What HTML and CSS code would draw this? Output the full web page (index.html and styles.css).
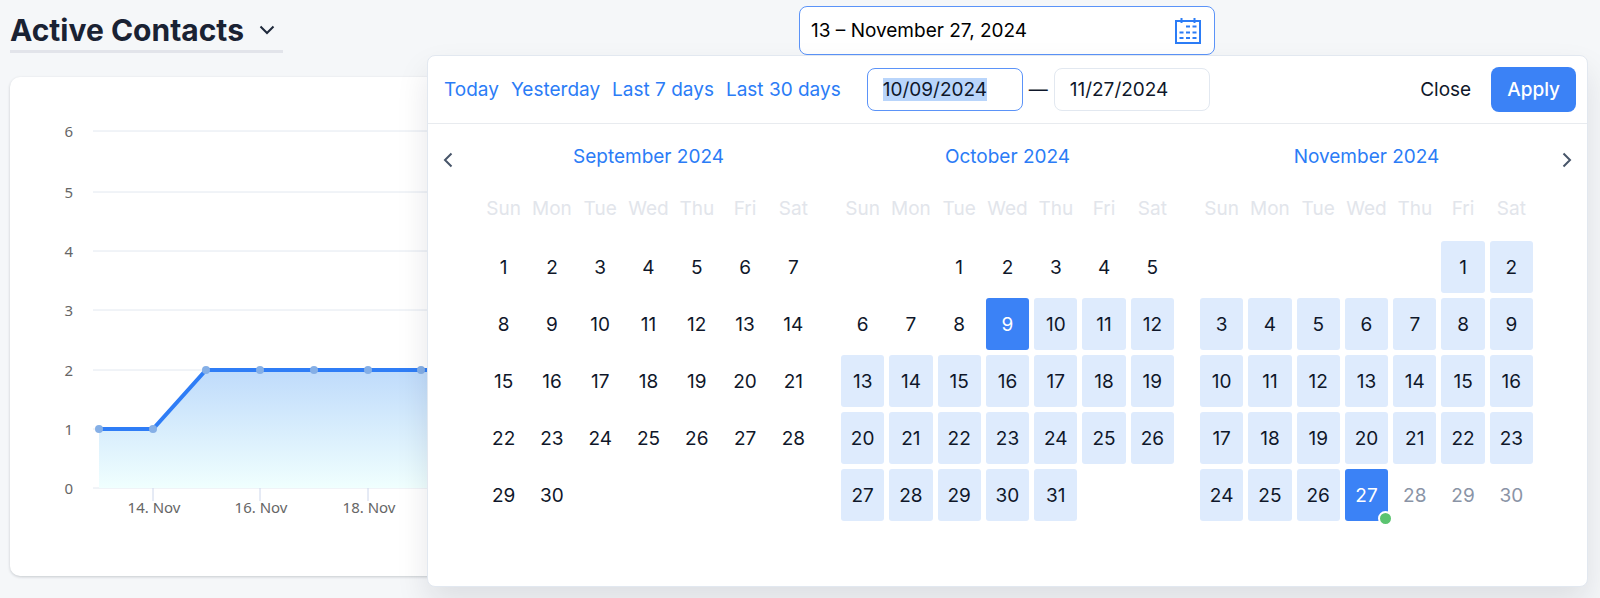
FILE: index.html
```
<!DOCTYPE html>
<html lang="en">
<head>
    <meta charset="UTF-8">
    <meta name="viewport" content="width=device-width, initial-scale=1.0">
    <title>Active Contacts</title>
    <link rel="stylesheet" href="styles.css">
</head>
<body>
    <header class="page-header">
        <h1 class="page-title">
            <button type="button" class="title-button">
                Active Contacts
                <svg width="16" height="10" viewBox="0 0 16 10" aria-hidden="true"><path d="M1.500 1.500L8 8l6.500-6.500"/></svg>
            </button>
        </h1>
        <button type="button" class="date-field">
            <span>13 – November 27, 2024</span>
            <svg width="28" height="28" viewBox="0 0 28 28" aria-hidden="true">
                <path d="M2 4h24v22H2zM7.500 1v5M20.500 1v5"/>
                <path d="M12 9.500h4M18.500 9.500h4M5.500 15.500h4M12 15.500h4M18.500 15.500h4M5.500 21h4M12 21h4M18.500 21h4"/>
            </svg>
        </button>
    </header>

    <main class="chart-card">
        <svg class="chart" role="img" aria-label="Active contacts per day">
            <defs>
                <linearGradient id="area-fill" x1="0" y1="0" x2="0" y2="1">
                    <stop offset="0" stop-color="#bfdbfb"/>
                    <stop offset="1" stop-color="#f0fffe"/>
                </linearGradient>
            </defs>
            <g id="chart-grid"></g>
            <g id="chart-series"></g>
        </svg>
    </main>

    <section class="picker" aria-label="Date range">
        <form class="picker-bar" onsubmit="event.preventDefault()">
            <nav class="presets">
                <a href="#today">Today</a>
                <a href="#yesterday">Yesterday</a>
                <a href="#last-7">Last 7 days</a>
                <a href="#last-30">Last 30 days</a>
            </nav>
            <div class="range">
                <input type="text" id="date-from" value="10/09/2024" aria-label="From">
                <span>—</span>
                <input type="text" id="date-to" value="11/27/2024" aria-label="To">
            </div>
            <div class="actions">
                <button type="button" class="close-button">Close</button>
                <button class="apply-button">Apply</button>
            </div>
        </form>
        <div class="picker-body">
            <button type="button" class="nav-button" aria-label="Previous month">
                <svg width="10" height="16" viewBox="0 0 10 16"><path d="M8.500 1.500L2 8l6.500 6.500"/></svg>
            </button>
            <div class="months" id="months"></div>
            <button type="button" class="nav-button" aria-label="Next month">
                <svg width="10" height="16" viewBox="0 0 10 16"><path d="M1.500 1.500L8 8l-6.500 6.500"/></svg>
            </button>
        </div>
    </section>

    <script>
        // Calendar
        const WEEKDAYS = ['Sun', 'Mon', 'Tue', 'Wed', 'Thu', 'Fri', 'Sat'];
        const rangeStart = new Date(2024, 9, 9).getTime();
        const rangeEnd = new Date(2024, 10, 27).getTime();
        const today = rangeEnd;

        function dayClass(time) {
            const names = ['day'];
            if (time === rangeStart || time === rangeEnd) {
                names.push('selected');
            } else if (time > rangeStart && time < rangeEnd) {
                names.push('in-range');
            }
            if (time === today) names.push('today');
            return names.join(' ');
        }

        function renderMonth(year, month) {
            const first = new Date(year, month, 1);
            const title = first.toLocaleString('en-US', { month: 'long', year: 'numeric' });
            const dayCount = new Date(year, month + 1, 0).getDate();
            const cells = Array(first.getDay()).fill('<td></td>');

            for (let day = 1; day <= dayCount; day++) {
                const time = new Date(year, month, day).getTime();
                const disabled = time > today ? 'disabled' : '';
                cells.push(`<td><button type="button" class="${dayClass(time)}" ${disabled}>${day}</button></td>`);
            }

            let rows = '';
            for (let i = 0; i < cells.length; i += 7) {
                rows += `<tr>${cells.slice(i, i + 7).join('')}</tr>`;
            }
            const heads = WEEKDAYS.map(name => `<th scope="col">${name}</th>`).join('');
            return `<table class="month"><caption>${title}</caption><thead><tr>${heads}</tr></thead><tbody>${rows}</tbody></table>`;
        }

        document.getElementById('months').innerHTML = [8, 9, 10].map(m => renderMonth(2024, m)).join('');

        // Chart
        const gridY = [411, 352, 293, 233, 174, 115, 54]; // 0 to 6
        const values = [1, 1, 2, 2, 2, 2, 2, 2];
        const pointX = i => Math.round(89 + i * 53.700);

        let grid = gridY.map((y, i) => `<text x="63" y="${y + 6}" text-anchor="end">${i}</text><line x1="83" x2="97%" y1="${y}" y2="${y}"/>`).join('');
        [1, 3, 5].forEach(i => {
            grid += `<line class="tick" x1="${pointX(i)}" x2="${pointX(i)}" y1="411" y2="424"/>`;
            grid += `<text x="${pointX(i) + 1}" y="436" text-anchor="middle">${13 + i}. Nov</text>`;
        });
        document.getElementById('chart-grid').innerHTML = grid;

        const points = values.map((v, i) => `${pointX(i)},${gridY[v]}`);
        document.getElementById('chart-series').innerHTML =
            `<polygon points="${pointX(0)},411 ${points.join(' ')} ${pointX(values.length - 1)},411"/>` +
            `<polyline points="${points.join(' ')}"/>` +
            values.map((v, i) => `<circle cx="${pointX(i)}" cy="${gridY[v]}" r="4"/>`).join('');

        // Start editing with the first date
        const dateFrom = document.getElementById('date-from');
        dateFrom.focus();
        dateFrom.select();
    </script>
</body>
</html>
```
FILE: styles.css
```
* {
    box-sizing: border-box;
}
body {
    position: relative;
    margin: 0;
    padding: 6px 10px 22px;
    background-color: #f5f7f9;
    color: #0f172a;
    font-family: Inter, "Liberation Sans", sans-serif;
    font-size: 19px;
}
button, input {
    font: inherit;
    color: inherit;
}
button {
    padding: 0;
    border: none;
    background: none;
    cursor: pointer;
}
svg {
    fill: none;
}

/* header */
.page-header {
    display: flex;
    align-items: flex-start;
    justify-content: space-between;
    margin-bottom: 22px;
}
.page-title {
    margin: 0;
    font-size: 30px;
    font-weight: 700;
}
.title-button {
    display: flex;
    align-items: center;
    gap: 15px;
    height: 47px;
    padding: 4px 8px 0 0;
    border-bottom: 3px solid #e2e4ea;
    color: #1a2233;
}
.title-button svg {
    stroke: #1e293b;
    stroke-width: 2;
}
.date-field {
    display: flex;
    align-items: center;
    justify-content: space-between;
    width: 416px;
    height: 49px;
    margin-right: 375px;
    padding: 0 12px 0 11px;
    border: 1px solid #5b93f8;
    border-radius: 8px;
    background-color: #fff;
    color: #000;
}
.date-field svg {
    stroke: #2b7cf6;
    stroke-width: 2;
}

/* chart */
.chart-card {
    height: 499px;
    margin-right: 8px;
    border-radius: 10px;
    background-color: #fff;
    box-shadow: 0 1px 3px rgba(15, 23, 42, 0.2);
}
.chart {
    display: block;
    width: 100%;
    height: 460px;
}
.chart text {
    fill: #666;
    font-family: "Noto Sans", sans-serif;
    font-size: 15px;
}
.chart line {
    stroke: #e2e8f0;
}
.chart .tick {
    stroke: #ccd6eb;
}
.chart polygon {
    fill: url(#area-fill);
}
.chart polyline {
    stroke: #2f7df6;
    stroke-width: 4;
}
.chart circle {
    fill: #85afe6;
}

/* date range picker */
.picker {
    position: absolute;
    top: 55px;
    right: 12px;
    left: 427px;
    padding-bottom: 60px;
    border: 1px solid #e2e8f0;
    border-radius: 8px;
    background-color: #fff;
    box-shadow: 0 16px 32px rgba(15, 23, 42, 0.1);
}
.picker-bar {
    display: flex;
    align-items: center;
    height: 68px;
    padding: 0 11px 0 16px;
    border-bottom: 1px solid #e8ebef;
}
.presets {
    display: flex;
    gap: 12px;
    white-space: nowrap;
}
.presets a {
    color: #2b7cf6;
    text-decoration: none;
}
.range {
    display: flex;
    align-items: center;
    gap: 6px;
    margin-left: 26px;
}
.range input {
    width: 156px;
    height: 43px;
    padding: 0 15px;
    border: 1px solid #e2e8f0;
    border-radius: 8px;
    outline: none;
    background-color: #fff;
}
.range input:focus {
    border-color: #5b93f8;
}
.range input::selection {
    background-color: #b9d5fb;
    color: #0f172a;
}
.actions {
    display: flex;
    align-items: center;
    gap: 20px;
    margin-left: auto;
}
.apply-button {
    height: 45px;
    padding: 0 16px;
    border-radius: 8px;
    background-color: #3b82f6;
    color: #fff;
    font-weight: 500;
}
.picker-body {
    display: flex;
    align-items: flex-start;
    gap: 10px;
    padding: 14px 1px 0;
}
.nav-button {
    display: flex;
    align-items: center;
    justify-content: center;
    width: 38px;
    height: 44px;
}
.nav-button svg {
    stroke: #475569;
    stroke-width: 2;
}
.months {
    display: flex;
    flex: 1;
    gap: 16px;
}
.month {
    flex: 1;
    width: 0;
    table-layout: fixed;
    border-spacing: 5px;
}
.month caption {
    color: #2b7cf6;
    line-height: 38px;
}
.month th {
    height: 55px;
    padding: 0;
    color: #e2e5eb;
    font-weight: 400;
}
.month td {
    padding: 0;
}
.day {
    display: block;
    position: relative;
    width: 100%;
    height: 52px;
    border-radius: 3px;
}
.day:disabled {
    color: #8a94a6;
}
.in-range {
    background-color: #deebfd;
}
.selected {
    background-color: #3b82f6;
    color: #fff;
}
.today::after {
    content: "";
    position: absolute;
    right: -5px;
    bottom: -5px;
    width: 11px;
    height: 11px;
    border: 2px solid #fff;
    border-radius: 50%;
    background-color: #5bc470;
}
```
